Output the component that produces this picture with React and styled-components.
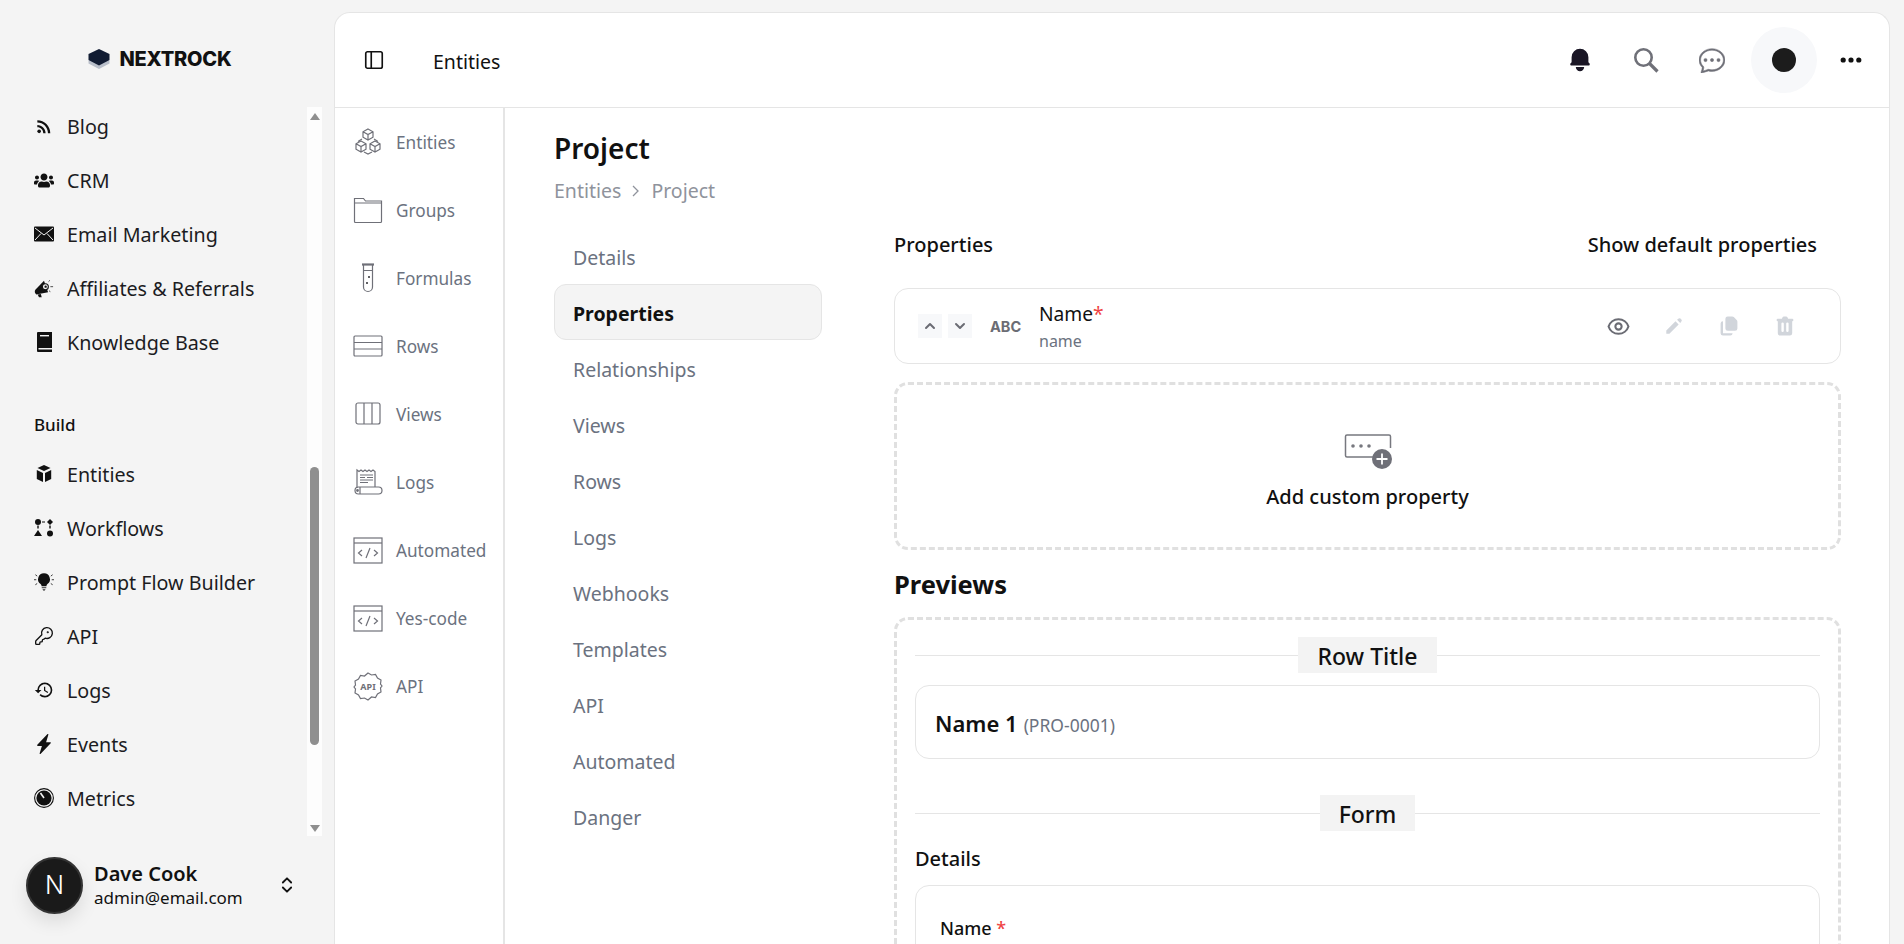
import styled, { createGlobalStyle } from "styled-components";
import { ChevronsUpDown, PanelLeft, KeyRound } from "lucide-react";
import { MdRssFeed, MdHistory } from "react-icons/md";
import { HiBell, HiChevronUp, HiChevronDown, HiOutlineEye, HiPencil, HiDocumentDuplicate, HiTrash, HiDotsHorizontal } from "react-icons/hi";
import { BsChatDots, BsLightningChargeFill } from "react-icons/bs";
import { FaUsers } from "react-icons/fa";

const GlobalStyle = createGlobalStyle`
  html, body {
    margin: 0;
    height: 100%;
    overflow: hidden;
    background: #f4f4f4;
    font-family: "Noto Sans", "Open Sans", sans-serif;
    color: #111;
  }
  * { box-sizing: border-box; }
`;

/* ---- drawn icons ---- */

const MailIcon = () => (
  <svg width="20" height="16" viewBox="0 0 20 16">
    <rect width="20" height="15" y=".5" fill="#111" rx="1" />
    <path d="M1 2l9 7 9-7M1 14l6-6.500M19 14l-6-6.500" fill="none" stroke="#f4f4f4" strokeWidth="1" />
  </svg>
);

const MegaphoneIcon = () => (
  <svg width="23" height="21" viewBox="0 0 22 20" fill="#111">
    <path d="M11 1.500L15.500 14 2.500 16.500C.5 15 .5 13 1.500 11.500z" />
    <path d="M4 16.500l1.500 3h3l-1-3.500z" />
    <circle cx="12.500" cy="8" r="3.300" fill="#f4f4f4" stroke="#111" strokeWidth="1.200" />
    <circle cx="12.800" cy="8" r="1.300" />
    <path d="M16 2.500l1.500-1.500M18 8h3M16.500 12.500l1.500 1" stroke="#111" strokeWidth=".8" />
  </svg>
);

const BookIcon = () => (
  <svg width="15" height="20" viewBox="0 0 15 20">
    <path d="M0 1a1 1 0 0 1 1-1h14v16H1.500v1.500H15V20H1a1 1 0 0 1-1-1z" fill="#111" />
    <path d="M3 3h9v1.400H3z" fill="#f4f4f4" />
  </svg>
);

const CubeIcon = () => (
  <svg width="20" height="20" viewBox="0 0 20 20" fill="#111">
    <path d="M10 1l6.500 3-6.500 3-6.500-3z" />
    <path d="M2.800 6l6.200 2.900V18l-6.200-2.900zM17.200 6L11 8.900V18l6.200-2.900z" />
  </svg>
);

const WorkflowIcon = () => (
  <svg width="20" height="20" viewBox="0 0 20 20" fill="#111">
    <circle cx="4" cy="4" r="3" />
    <path d="M16 1l3 3-3 3-3-3z" />
    <path d="M4 12l4 6H0z" />
    <circle cx="16" cy="15.500" r="3" />
    <path d="M3.300 7.500h1.400v3H3.300zM15.300 7.500h1.400v3h-1.400zM8 3.400h3v1.200H8z" />
  </svg>
);

const BulbIcon = () => (
  <svg width="22" height="22" viewBox="0 0 22 22" fill="#111">
    <path d="M11 1.500a6.500 6.500 0 0 0-3.800 11.800c.8.700 1.100 1.400 1.100 2.400h5.400c0-1 .3-1.700 1.100-2.400A6.500 6.500 0 0 0 11 1.500z" />
    <path d="M8.500 16.500h5v1.500h-5zM9.300 18.700h3.400L11.800 20.500h-1.600z" opacity=".65" />
    <path d="M1.500 3l2 1.500M20.500 3l-2 1.500M0 8.500h2.500M19.500 8.500H22M1.500 14l2-1.300M20.500 14l-2-1.300" stroke="#111" strokeWidth=".9" />
  </svg>
);

const GaugeIcon = () => (
  <svg width="20" height="20" viewBox="0 0 20 20">
    <circle cx="10" cy="10" r="9.400" fill="none" stroke="#111" strokeWidth="1.100" />
    <circle cx="10" cy="10" r="7.600" fill="#111" />
    <path d="M10 10L6.500 5" stroke="#f4f4f4" strokeWidth="1.600" />
  </svg>
);

const LogoIcon = () => (
  <svg width="22" height="20" viewBox="0 0 22 20">
    <path d="M11 6l10.500 5.500v3L11 20 .5 14.500v-3z" fill="#b9bfca" />
    <path d="M11 0l10.500 5v6L11 16.500.5 11V5z" fill="#111c33" />
  </svg>
);

const SearchIcon = () => (
  <svg width="26" height="26" viewBox="0 0 26 26" fill="none" stroke="#6f7078">
    <circle cx="10.500" cy="10.500" r="8.200" strokeWidth="2.600" />
    <path d="M16.500 16.500l8 8" strokeWidth="3.200" />
  </svg>
);

const Sub = styled.svg.attrs({ viewBox: "0 0 30 30", fill: "none", stroke: "#6f7078", strokeWidth: 1.200 })`
  width: 30px;
  height: 30px;
  flex: none;
`;

const EntitiesIcon = () => (
  <Sub>
    <path d="M15 2l5 2.800v5.400L15 13l-5-2.800V4.800zM10 4.800l5 2.800 5-2.800M15 7.600V13" />
    <path d="M8 14l5 2.800v5.400L8 25l-5-2.800v-5.400zM3 16.800l5 2.800 5-2.800M8 19.600V25" />
    <path d="M22 14l5 2.800v5.400L22 25l-5-2.800v-5.400zM17 16.800l5 2.800 5-2.800M22 19.600V25" />
    <path d="M9 12l-4 2.500M21 12l4 2.500M11 25l4 2 4-2" />
  </Sub>
);

const FolderIcon = () => (
  <Sub strokeWidth="1.500">
    <path d="M1.500 3.500h9l2 2.500h16v20.500a1 1 0 0 1-1 1h-25a1 1 0 0 1-1-1zM1.500 8h27" />
  </Sub>
);

const TubeIcon = () => (
  <Sub stroke="#2b2b30" strokeWidth="1.500">
    <path d="M9 1.500h12" strokeWidth="2.200" />
    <path d="M10.500 2v22a4.500 4.500 0 0 0 9 0V2M10.500 7.500h9" />
    <circle cx="16" cy="14" r="1" fill="#2b2b30" stroke="none" />
    <circle cx="14" cy="20" r="1" fill="#2b2b30" stroke="none" />
  </Sub>
);

const RowsIcon = () => (
  <Sub strokeWidth="1.500">
    <rect x="1" y="5" width="28" height="20" rx="1" />
    <path d="M1 11.500h28M1 18h28" />
  </Sub>
);

const ViewsIcon = () => (
  <Sub strokeWidth="1.800">
    <rect x="3" y="4" width="24" height="21" rx="2" />
    <path d="M11 4v21M19 4v21" />
  </Sub>
);

const LogsIcon = () => (
  <Sub>
    <path d="M4 21V3l2 1.500L8 3l2 1.500L12 3l2 1.500L16 3l2 1.500L20 3l2 1.500V20" />
    <path d="M7 8h13M7 10.500h5M14 10.500h6M7 13h13M7 15.500h8" />
    <rect x="2" y="20" width="27" height="7" rx="3.500" />
    <path d="M7 20v7" />
    <circle cx="4.500" cy="23.500" r=".8" fill="#6f7078" />
  </Sub>
);

const CodeIcon = () => (
  <Sub strokeWidth="1.300">
    <rect x="1" y="3" width="28" height="25" />
    <path d="M1 8h28" />
    <path d="M9 15l-3.500 3L9 21M21 15l3.500 3L21 21M17 13l-4 10" />
  </Sub>
);

const ApiGearIcon = () => (
  <Sub>
    <path d="M15 2l3.500 2 4-.5 2 3.500 3.500 2-.5 4 1.500 2-1.500 2 .5 4-3.500 2-2 3.500-4-.5L15 29l-3.500-2-4 .5-2-3.500-3.500-2 .5-4L1 16l1.500-2-.5-4 3.500-2 2-3.500 4 .5z" />
    <text x="15" y="19" textAnchor="middle" fontSize="9" fontWeight="700" fill="#6f7078" stroke="none" fontFamily="Noto Sans">API</text>
  </Sub>
);

const AddPropIcon = () => (
  <svg width="48" height="36" viewBox="0 0 48 36" fill="none">
    <path d="M36 24H3a1.500 1.500 0 0 1-1.500-1.500v-19A1.500 1.500 0 0 1 3 2h42a1.500 1.500 0 0 1 1.500 1.500V15" stroke="#77787f" strokeWidth="1.500" />
    <circle cx="9" cy="13" r="1.800" fill="#77787f" />
    <circle cx="17" cy="13" r="1.800" fill="#77787f" />
    <circle cx="25" cy="13" r="1.800" fill="#77787f" />
    <circle cx="38" cy="26" r="10" fill="#6f7078" />
    <path d="M38 20.500v11M32.500 26h11" stroke="#fff" strokeWidth="1.800" />
  </svg>
);

/* ---- data ---- */

const MARKETING = [
  { label: "Blog", icon: <MdRssFeed size={23} /> },
  { label: "CRM", icon: <FaUsers size={21} /> },
  { label: "Email Marketing", icon: <MailIcon /> },
  { label: "Affiliates & Referrals", icon: <MegaphoneIcon /> },
  { label: "Knowledge Base", icon: <BookIcon /> },
];

const BUILD = [
  { label: "Entities", icon: <CubeIcon /> },
  { label: "Workflows", icon: <WorkflowIcon /> },
  { label: "Prompt Flow Builder", icon: <BulbIcon /> },
  { label: "API", icon: <KeyRound size={20} strokeWidth={1.600} /> },
  { label: "Logs", icon: <MdHistory size={22} /> },
  { label: "Events", icon: <BsLightningChargeFill size={20} /> },
  { label: "Metrics", icon: <GaugeIcon /> },
];

const SUBNAV = [
  { label: "Entities", icon: <EntitiesIcon /> },
  { label: "Groups", icon: <FolderIcon /> },
  { label: "Formulas", icon: <TubeIcon /> },
  { label: "Rows", icon: <RowsIcon /> },
  { label: "Views", icon: <ViewsIcon /> },
  { label: "Logs", icon: <LogsIcon /> },
  { label: "Automated", icon: <CodeIcon /> },
  { label: "Yes-code", icon: <CodeIcon /> },
  { label: "API", icon: <ApiGearIcon /> },
];

const TABS = ["Details", "Properties", "Relationships", "Views", "Rows", "Logs", "Webhooks", "Templates", "API", "Automated", "Danger"];

export default function App() {
  return (
    <>
      <GlobalStyle />
      <Shell>
        <Sidebar>
          <Logo>
            <LogoIcon />
            <LogoText>NEXTROCK</LogoText>
          </Logo>
          <NavArea>
            <NavList>
              {MARKETING.map((item) => (
                <NavItem key={item.label}>
                  <NavIcon>{item.icon}</NavIcon>
                  {item.label}
                </NavItem>
              ))}
              <NavHeading>Build</NavHeading>
              {BUILD.map((item) => (
                <NavItem key={item.label}>
                  <NavIcon>{item.icon}</NavIcon>
                  {item.label}
                </NavItem>
              ))}
            </NavList>
            <ScrollTrack>
              <ScrollArrow />
              <ScrollThumb />
              <ScrollArrow $down />
            </ScrollTrack>
          </NavArea>
          <UserRow>
            <Avatar>N</Avatar>
            <UserText>
              <UserName>Dave Cook</UserName>
              <UserMail>admin@email.com</UserMail>
            </UserText>
            <ChevronsUpDown size={20} strokeWidth={2.200} />
          </UserRow>
        </Sidebar>

        <Panel>
          <Header>
            <PanelLeft size={22} strokeWidth={1.800} />
            <HeaderTitle>Entities</HeaderTitle>
            <HeaderIcons>
              <HeaderIcon><HiBell size={28} color="#1a1625" /></HeaderIcon>
              <HeaderIcon><SearchIcon /></HeaderIcon>
              <HeaderIcon><BsChatDots size={26} color="#6f7078" stroke="#6f7078" strokeWidth="0.3" /></HeaderIcon>
              <ThemeCircle><ThemeDot /></ThemeCircle>
              <HeaderIcon><HiDotsHorizontal size={26} color="#111" /></HeaderIcon>
            </HeaderIcons>
          </Header>

          <PanelBody>
            <SubNav>
              {SUBNAV.map((item) => (
                <SubNavItem key={item.label}>
                  {item.icon}
                  <span>{item.label}</span>
                </SubNavItem>
              ))}
            </SubNav>

            <Content>
              <Title>Project</Title>
              <Breadcrumb>
                Entities
                <CrumbArrow viewBox="0 0 10 14"><path d="M2 2l5 5-5 5" /></CrumbArrow>
                Project
              </Breadcrumb>

              <Columns>
                <Tabs>
                  {TABS.map((tab) => (
                    <Tab key={tab} $active={tab === "Properties"}>{tab}</Tab>
                  ))}
                </Tabs>

                <Main>
                  <PropHeader>
                    <span>Properties</span>
                    <span>Show default properties</span>
                  </PropHeader>

                  <PropCard>
                    <SortButton><HiChevronUp size={20} /></SortButton>
                    <SortButton><HiChevronDown size={20} /></SortButton>
                    <TypeTag>ABC</TypeTag>
                    <PropText>
                      <PropName>Name<Req>*</Req></PropName>
                      <PropKey>name</PropKey>
                    </PropText>
                    <PropActions>
                      <HiOutlineEye size={25} color="#6b6c74" />
                      <HiPencil size={22} color="#d1d5db" />
                      <HiDocumentDuplicate size={24} color="#d1d5db" />
                      <HiTrash size={24} color="#d1d5db" />
                    </PropActions>
                  </PropCard>

                  <AddBox>
                    <AddPropIcon />
                    <AddLabel>Add custom property</AddLabel>
                  </AddBox>

                  <PreviewTitle>Previews</PreviewTitle>

                  <PreviewBox>
                    <Divider><DividerLabel>Row Title</DividerLabel></Divider>
                    <RowCard>
                      <RowName>Name 1</RowName>
                      <RowCode>(PRO-0001)</RowCode>
                    </RowCard>
                    <Divider $spaced><DividerLabel>Form</DividerLabel></Divider>
                    <FormHeading>Details</FormHeading>
                    <FormCard>
                      <FieldLabel>Name <Req>*</Req></FieldLabel>
                    </FormCard>
                  </PreviewBox>
                </Main>
              </Columns>
            </Content>
          </PanelBody>
        </Panel>
      </Shell>
    </>
  );
}

const Shell = styled.div`
  display: flex;
  height: 944px;
  overflow: hidden;
`;

const Sidebar = styled.aside`
  width: 334px;
  flex: none;
  display: flex;
  flex-direction: column;
`;

const Logo = styled.div`
  height: 107px;
  padding: 10px 14px 0 0;
  display: flex;
  align-items: center;
  justify-content: center;
  gap: 9px;
`;

const LogoText = styled.span`
  font-family: Inter, sans-serif;
  font-weight: 800;
  font-size: 20px;
  letter-spacing: -0.2px;
`;

const NavArea = styled.div`
  height: 729px;
  display: flex;
`;

const NavList = styled.nav`
  width: 307px;
  margin-top: -1px;
  padding-left: 34px;
  display: flex;
  flex-direction: column;
  gap: 14px;
`;

const NavItem = styled.div`
  height: 40px;
  display: flex;
  align-items: center;
  gap: 13px;
  font-size: 19.700px;
  color: #1c1c1f;
`;

const NavIcon = styled.span`
  width: 20px;
  flex: none;
  display: flex;
  justify-content: center;
  color: #111;
`;

const NavHeading = styled.div`
  height: 24px;
  margin: 37px 0 3px;
  font-size: 17px;
  font-weight: 500;
  line-height: 24px;
`;

const ScrollTrack = styled.div`
  width: 15px;
  background: #fdfdfd;
  display: flex;
  flex-direction: column;
  align-items: center;
`;

const ScrollArrow = styled.div`
  width: 0;
  height: 0;
  margin: ${(p) => (p.$down ? "auto 0 4px" : "6px 0 0")};
  border-left: 5px solid transparent;
  border-right: 5px solid transparent;
  border-bottom: ${(p) => (p.$down ? "none" : "7px solid #8f8f8f")};
  border-top: ${(p) => (p.$down ? "7px solid #8f8f8f" : "none")};
`;

const ScrollThumb = styled.div`
  width: 9px;
  height: 278px;
  margin-top: 347px;
  border-radius: 5px;
  background: #8f8f8f;
`;

const UserRow = styled.div`
  flex: 1;
  display: flex;
  align-items: center;
  padding: 0 0 10px 26px;
`;

const Avatar = styled.div`
  width: 57px;
  height: 57px;
  flex: none;
  border-radius: 50%;
  background: #1a1a1a;
  color: #fff;
  border: 2px solid #333;
  box-shadow: 0 8px 18px rgba(0, 0, 0, 0.1);
  display: flex;
  align-items: center;
  justify-content: center;
  font-family: Inter, sans-serif;
  font-size: 25px;
  font-weight: 300;
`;

const UserText = styled.div`
  width: 183px;
  margin-left: 11px;
`;

const UserName = styled.div`
  font-size: 20px;
  font-weight: 600;
  line-height: 26px;
`;

const UserMail = styled.div`
  font-size: 17px;
  line-height: 22px;
`;

const Panel = styled.main`
  flex: 1;
  margin: 12px 14px 0 0;
  background: #fff;
  border: 1px solid #e5e5e5;
  border-bottom: none;
  border-radius: 16px 16px 0 0;
  display: flex;
  flex-direction: column;
  overflow: hidden;
`;

const Header = styled.header`
  height: 95px;
  flex: none;
  border-bottom: 1px solid #e5e5e5;
  padding: 0 5px 0 28px;
  display: flex;
  align-items: center;
`;

const HeaderTitle = styled.span`
  margin: 2px 0 0 48px;
  font-size: 19.500px;
`;

const HeaderIcons = styled.div`
  margin-left: auto;
  display: flex;
  align-items: center;
`;

const HeaderIcon = styled.span`
  width: 66px;
  display: flex;
  justify-content: center;
`;

const ThemeCircle = styled.span`
  width: 66px;
  height: 66px;
  margin: 0 1px 0 6px;
  border-radius: 50%;
  background: #f7f8fa;
  display: flex;
  align-items: center;
  justify-content: center;
`;

const ThemeDot = styled.span`
  width: 24px;
  height: 24px;
  border-radius: 50%;
  background: #1c1c1c;
`;

const PanelBody = styled.div`
  flex: 1;
  display: flex;
  min-height: 0;
`;

const SubNav = styled.nav`
  width: 170px;
  flex: none;
  border-right: 2px solid #e5e5e5;
  padding: 0 0 0 18px;
`;

const SubNavItem = styled.div`
  height: 68px;
  display: flex;
  align-items: center;
  gap: 13px;
  font-size: 17.200px;
  color: #6b7280;
`;

const Content = styled.div`
  flex: 1;
  padding: 21px 48px 0 49px;
`;

const Title = styled.h1`
  margin: 0;
  font-size: 28px;
  font-weight: 600;
  line-height: 38px;
`;

const Breadcrumb = styled.div`
  margin-top: 9px;
  display: flex;
  align-items: center;
  gap: 10px;
  font-size: 19.500px;
  line-height: 30px;
  color: #8f939c;
`;

const CrumbArrow = styled.svg`
  width: 10px;
  height: 14px;
  fill: none;
  stroke: #8f939c;
  stroke-width: 1.300;
`;

const Columns = styled.div`
  margin-top: 22px;
  display: flex;
  gap: 72px;
`;

const Tabs = styled.div`
  width: 268px;
  flex: none;
  display: flex;
  flex-direction: column;
`;

const Tab = styled.div`
  height: 56px;
  padding: 2px 0 0 18px;
  display: flex;
  align-items: center;
  font-size: 19.500px;
  font-weight: ${(p) => (p.$active ? 700 : 400)};
  color: ${(p) => (p.$active ? "#111" : "#6b7280")};
  background: ${(p) => (p.$active ? "#f4f4f4" : "transparent")};
  border: 1px solid ${(p) => (p.$active ? "#e5e5e5" : "transparent")};
  border-radius: 12px;
`;

const Main = styled.div`
  flex: 1;
  min-width: 0;
  padding-top: 1px;
`;

const PropHeader = styled.div`
  height: 30px;
  padding-right: 24px;
  display: flex;
  align-items: center;
  justify-content: space-between;
  font-size: 20px;
  font-weight: 500;
`;

const PropCard = styled.div`
  height: 76px;
  margin-top: 29px;
  padding: 0 43px 0 23px;
  border: 1.500px solid #e5e5e5;
  border-radius: 14px;
  display: flex;
  align-items: center;
`;

const SortButton = styled.span`
  width: 24px;
  height: 24px;
  margin-right: 6px;
  background: #f7f8fa;
  color: #6b6c74;
  display: flex;
  align-items: center;
  justify-content: center;
`;

const TypeTag = styled.span`
  margin-left: 12px;
  width: 49px;
  font-family: Inter, sans-serif;
  font-size: 14.500px;
  font-weight: 700;
  color: #6b6c74;
`;

const PropText = styled.div`
  display: flex;
  flex-direction: column;
`;

const PropName = styled.span`
  font-size: 19.200px;
  line-height: 28px;
`;

const Req = styled.span`
  color: #ef4444;
`;

const PropKey = styled.span`
  margin-top: 2px;
  font-size: 16px;
  line-height: 22px;
  color: #6b7280;
`;

const PropActions = styled.div`
  margin-left: auto;
  display: flex;
  align-items: center;
  gap: 32px;
`;

const AddBox = styled.div`
  height: 168px;
  margin-top: 18px;
  padding-top: 10px;
  border: 3px dashed #e0e0e0;
  border-radius: 14px;
  display: flex;
  flex-direction: column;
  align-items: center;
  justify-content: center;
  gap: 14px;
`;

const AddLabel = styled.div`
  font-size: 20px;
  font-weight: 500;
`;

const PreviewTitle = styled.h2`
  margin: 16px 0 0;
  font-size: 25.500px;
  font-weight: 700;
  line-height: 36px;
`;

const PreviewBox = styled.div`
  margin-top: 15px;
  padding: 17px 18px 40px;
  border: 3px dashed #e0e0e0;
  border-radius: 14px;
`;

const Divider = styled.div`
  margin-top: ${(p) => (p.$spaced ? "36px" : "0")};
  height: 36px;
  display: flex;
  align-items: center;
  justify-content: center;
  background: linear-gradient(#e5e5e5, #e5e5e5) center / 100% 1px no-repeat;
`;

const DividerLabel = styled.span`
  padding: 2px 19px 0;
  background: #f3f3f3;
  font-size: 23px;
  font-weight: 500;
  line-height: 34px;
`;

const RowCard = styled.div`
  height: 74px;
  margin-top: 12px;
  padding: 2px 0 0 19px;
  border: 1.500px solid #e5e5e5;
  border-radius: 14px;
  display: flex;
  align-items: center;
  gap: 6px;
`;

const RowName = styled.span`
  font-size: 22px;
  font-weight: 600;
`;

const RowCode = styled.span`
  margin-top: 3px;
  font-size: 17.500px;
  color: #6b7280;
`;

const FormHeading = styled.div`
  margin-top: 15px;
  font-size: 20px;
  font-weight: 500;
  line-height: 26px;
`;

const FormCard = styled.div`
  margin-top: 13px;
  height: 140px;
  padding: 30px 24px;
  border: 1.500px solid #e5e5e5;
  border-radius: 14px;
`;

const FieldLabel = styled.div`
  font-size: 18px;
  font-weight: 500;
  line-height: 24px;
`;
